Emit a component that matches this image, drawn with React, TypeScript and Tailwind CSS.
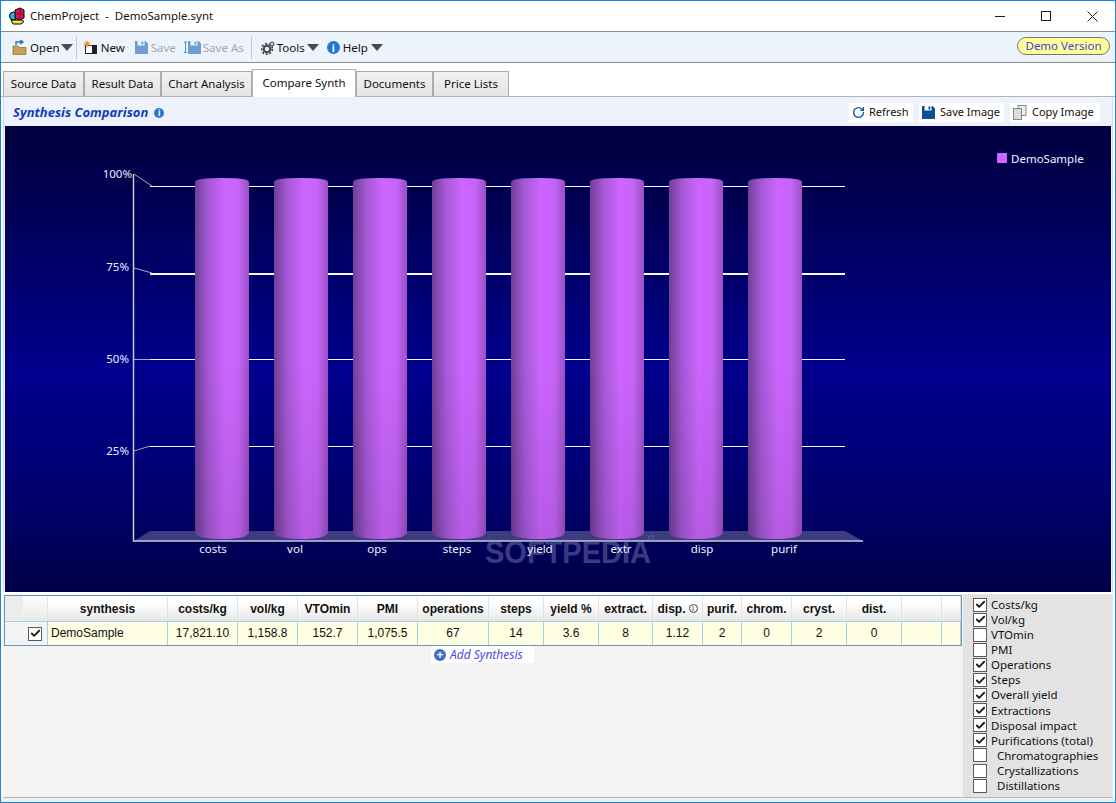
import React from 'react';
import { Check, RotateCw } from 'lucide-react';

const tabs = [
  { label: 'Source Data', w: 'w-[81px]' },
  { label: 'Result Data', w: 'w-[77px]' },
  { label: 'Chart Analysis', w: 'w-[91px]' },
  { label: 'Compare Synth', w: 'w-[104px]', active: true },
  { label: 'Documents', w: 'w-[77px]' },
  { label: 'Price Lists', w: 'w-[76px]' },
];

const barXs = [195, 274, 353, 432, 511, 590, 669, 748];
const xLabels = [
  ['costs', 213],
  ['vol', 295],
  ['ops', 377],
  ['steps', 457],
  ['yield', 540],
  ['extr', 621],
  ['disp', 702],
  ['purif', 784],
] as const;
const yLabels = [
  ['100%', 132, 178],
  ['75%', 129, 271],
  ['50%', 129, 363],
  ['25%', 129, 455],
] as const;

const columns = [
  ['synthesis', 'DemoSample', 'w-[120px]'],
  ['costs/kg', '17,821.10', 'w-[70px]'],
  ['vol/kg', '1,158.8', 'w-[60px]'],
  ['VTOmin', '152.7', 'w-[60px]'],
  ['PMI', '1,075.5', 'w-[60px]'],
  ['operations', '67', 'w-[71px]'],
  ['steps', '14', 'w-[55px]'],
  ['yield %', '3.6', 'w-[55px]'],
  ['extract.', '8', 'w-[54px]'],
  ['disp.', '1.12', 'w-[50px]'],
  ['purif.', '2', 'w-[39px]'],
  ['chrom.', '0', 'w-[50px]'],
  ['cryst.', '2', 'w-[55px]'],
  ['dist.', '0', 'w-[55px]'],
  ['', '', 'w-[40px]'],
  ['', '', 'w-[19px]'],
];

const options = [
  ['Costs/kg', true],
  ['Vol/kg', true],
  ['VTOmin', false],
  ['PMI', false],
  ['Operations', true],
  ['Steps', true],
  ['Overall yield', true],
  ['Extractions', true],
  ['Disposal impact', true],
  ['Purifications (total)', true],
  ['Chromatographies', false, true],
  ['Crystallizations', false, true],
  ['Distillations', false, true],
] as const;

const Caret = () => (
  <svg width="12" height="7" viewBox="0 0 12 7"><path d="M0 0h12L6 7z" fill="#4a4a4a" /></svg>
);

const Floppy = ({ color }: { color: string }) => (
  <svg width="13" height="13" viewBox="0 0 13 13">
    <path d="M0 0h2.500v4.500h7V0h1L13 2.500V13H0z" fill={color} />
    <rect x="6.500" y="0.500" width="1.800" height="3" fill={color} />
  </svg>
);

const Box = ({ on }: { on: boolean }) => (
  <span className="flex h-[14px] w-[14px] shrink-0 items-center justify-center border border-[#5a5a5a] bg-white">
    {on && <Check size={11} strokeWidth={4} className="text-[#1a1a1a]" />}
  </span>
);

function AppLogo() {
  return (
    <svg width="16" height="18" viewBox="0 0 16 18">
      <circle cx="4.500" cy="9" r="4" fill="#19c4d8" stroke="#000" />
      <path d="M6 3l5-2 4 2v8l-4 2-5-2z" fill="#e0115f" stroke="#000" />
      <path d="M11 1v12M6 7h9" stroke="#7a1030" />
      <path d="M2 13h10l3 1.500-3 2.500H4z" fill="#f3e04a" stroke="#000" />
    </svg>
  );
}

function Chart() {
  return (
    <div className="h-[466px] w-[1106px] bg-[linear-gradient(to_bottom,#000040_0%,#000058_20%,#00008e_52%,#000070_78%,#000048_100%)]">
      <svg width="1106" height="466" viewBox="5 126 1106 466" style={{ fontFamily: '"Noto Sans", sans-serif' }}>
        <defs>
          <linearGradient id="barH" x1="0" x2="1" y1="0" y2="0">
            <stop offset="0" stopColor="#6f3f95" />
            <stop offset="0.25" stopColor="#a658d6" />
            <stop offset="0.55" stopColor="#cc66ff" />
            <stop offset="0.8" stopColor="#c664f8" />
            <stop offset="1" stopColor="#9a50c4" />
          </linearGradient>
          <linearGradient id="barV" x1="0" x2="0" y1="0" y2="1">
            <stop offset="0.5" stopColor="#000" stopOpacity="0" />
            <stop offset="1" stopColor="#000" stopOpacity="0.1" />
          </linearGradient>
        </defs>

        <polygon points="134,541 150,531 845,531 863,541" fill="#3c3c80" />
        {[186, 273, 359, 446].map((y, i) => (
          <line key={y} x1="150" x2="845" y1={y + 0.5} y2={y + 0.5} stroke="#f8f8f8" strokeWidth={i === 1 ? 2 : 1} shapeRendering="crispEdges" />
        ))}
        <g stroke="#a8a8a8" strokeWidth="1" fill="none">
          <path d="M134 174L152 186" />
          <path d="M134 268L152 273" />
          <path d="M134 359.500L150 359.500" />
          <path d="M134 451L150 446" />
        </g>
        <path d="M133.500 174V541H863" stroke="#c8c8d8" strokeWidth="1.500" fill="none" />

        {barXs.map(x => {
          const d = `M${x} 182Q${x} 178 ${x + 27} 178Q${x + 54} 178 ${x + 54} 182V532Q${x + 54} 539 ${x + 27} 539Q${x} 539 ${x} 532Z`;
          return (
            <g key={x}>
              <path d={d} fill="url(#barH)" />
              <path d={d} fill="url(#barV)" />
            </g>
          );
        })}

        <text x="485" y="563" textLength="166" lengthAdjust="spacingAndGlyphs" fontSize="31" fontWeight="700" fill="#8080b8" opacity="0.45" style={{ fontFamily: '"Liberation Sans", sans-serif' }}>SOFTPEDIA</text>
        <circle cx="651" cy="538" r="2.500" fill="none" stroke="#8080b8" strokeOpacity="0.45" />

        {yLabels.map(([t, x, y]) => (
          <text key={t} x={x} y={y} textAnchor="end" fontSize="11.500" fill="#e8ecff">{t}</text>
        ))}
        {xLabels.map(([t, x]) => (
          <text key={t} x={x} y={553} textAnchor="middle" fontSize="11.500" fill="#f0f2ff">{t}</text>
        ))}

        <rect x="997" y="153" width="10" height="10" fill="#cc66ff" />
        <text x="1011" y="162.500" fontSize="11.500" fill="#f0f2ff">DemoSample</text>
      </svg>
    </div>
  );
}

function ComparisonTable() {
  return (
    <div className="mt-[1px] w-[958px] border border-[#6f94b4] font-['Liberation_Sans',sans-serif] text-[12px] text-[#111]">
      <div className="flex h-[26px] border-b border-[#a8d0e4] font-bold">
        <div className="w-[18px] shrink-0 border-r border-[#eee] bg-[#ececec]" />
        <div className="w-[25px] shrink-0 border-r border-[#e4e4e4] bg-[linear-gradient(to_bottom,#fff,#e8e8e8)]" />
        {columns.map(([head, , w], i) => (
          <div key={i} className={`${w} flex shrink-0 items-center justify-center gap-[3px] border-r border-[#e4e4e4] bg-[linear-gradient(to_bottom,#fff_30%,#e6e6e6)]`}>
            {head}
            {head === 'disp.' && (
              <span className="flex h-[9px] w-[9px] items-center justify-center rounded-full border border-[#444] text-[7px] font-normal leading-none">i</span>
            )}
          </div>
        ))}
      </div>
      <div className="flex h-[23px]">
        <div className="w-[18px] shrink-0 bg-[#f1f3f6]" />
        <div className="flex w-[25px] shrink-0 items-center justify-center border-r border-[#a8d0e4] bg-[#f4f4f4]"><Box on /></div>
        {columns.map(([, value, w], i) => (
          <div key={i} className={`${w} flex shrink-0 items-center border-r border-[#a8d0e4] bg-[#fefee2] pb-px ${i === 0 ? 'justify-start pl-[3px]' : 'justify-center'}`}>
            {value}
          </div>
        ))}
      </div>
    </div>
  );
}

export default function App() {
  return (
    <div className="flex h-[803px] w-[1116px] flex-col overflow-hidden border border-[#1883d7] bg-white font-['Noto_Sans',sans-serif] text-[11.5px] text-[#111]">
      {/* title bar */}
      <div className="flex h-[30px] shrink-0 items-center pl-[8px]">
        <AppLogo />
        <span className="ml-[5px] whitespace-pre">ChemProject  -  DemoSample.synt</span>
        <div className="ml-auto flex items-center text-[#222]">
          <div className="flex w-[46px] justify-center"><div className="h-px w-[10px] bg-[#222]" /></div>
          <div className="flex w-[46px] justify-center"><div className="h-[10px] w-[10px] border border-[#222]" /></div>
          <div className="flex w-[46px] justify-center">
            <svg width="11" height="11" viewBox="0 0 11 11"><path d="M.500.500l10 10M10.500.500l-10 10" stroke="#222" /></svg>
          </div>
        </div>
      </div>

      {/* toolbar */}
      <div className="flex h-[32px] shrink-0 items-center border-y border-[#8c8c8c] bg-[#edf3fb] pl-[11px] pt-px">
        <svg width="15" height="15" viewBox="0 0 15 15">
          <path d="M1 6h5l1 1.500h7V14.500H1z" fill="#c9a05a" stroke="#8a6a2a" strokeWidth="0.700" />
          <path d="M4 5V2h6M8 0l3 2-3 2" stroke="#2a72c0" strokeWidth="1.400" fill="none" />
        </svg>
        <span className="ml-[3px]">Open</span>
        <span className="ml-[1px]"><Caret /></span>
        <div className="ml-[3px] h-[22px] w-px bg-[#c8c8c8]" />
        <svg className="ml-[6px]" width="15" height="15" viewBox="0 0 15 15">
          <rect x="2" y="5" width="12" height="9" fill="#222" />
          <rect x="3" y="6" width="6" height="7" fill="#fff" />
          <path d="M4 0l1 2.500L7.500 2 6 4l1.500 2L5 5.500 4 8 3 5.500.500 6 2 4 .500 2 3 2.500z" fill="#e8912a" />
        </svg>
        <span className="ml-[3px]">New</span>
        <span className="ml-[10px]"><Floppy color="#6c9fcf" /></span>
        <span className="ml-[3px] text-[#a4a8ac]">Save</span>
        <span className="ml-[8px] flex items-center gap-px">
          <svg width="3" height="13" viewBox="0 0 3 13"><path d="M0 1h3M1.500 1v10M0 11.500h3" stroke="#4f8cc4" fill="none" /></svg>
          <Floppy color="#6c9fcf" />
        </span>
        <span className="ml-[2px] text-[#a4a8ac]">Save As</span>
        <div className="ml-[7px] h-[22px] w-px bg-[#c8c8c8]" />
        <svg className="ml-[9px]" width="14" height="14" viewBox="0 0 14 14">
          <circle cx="6" cy="8" r="3.300" fill="none" stroke="#444" strokeWidth="2.200" />
          <circle cx="6" cy="8" r="5.400" fill="none" stroke="#444" strokeWidth="1.600" strokeDasharray="2 1.800" />
          <circle cx="11" cy="3" r="1.800" fill="none" stroke="#666" strokeWidth="1.400" />
        </svg>
        <span className="ml-[2px]">Tools</span>
        <span className="ml-[2px]"><Caret /></span>
        <span className="ml-[8px] flex h-[13px] w-[13px] items-center justify-center rounded-full bg-[#1e78d8] text-[10px] font-bold leading-none text-white">i</span>
        <span className="ml-[3px]">Help</span>
        <span className="ml-[3px]"><Caret /></span>
        <div className="ml-auto mr-[5px] mt-[-3px] flex h-[18px] w-[93px] items-center justify-center rounded-[9px] border border-[#777] bg-[#ffff99] text-[#4a3cd8]">Demo Version</div>
      </div>

      {/* tabs */}
      <div className="flex h-[34px] shrink-0 items-end border-b border-[#b4b4b4] pl-[2px]">
        {tabs.map(t =>
          t.active ? (
            <div key={t.label} className={`${t.w} z-10 mb-[-1px] flex h-[28px] items-center justify-center border border-b-0 border-[#b0b0b0] bg-white pb-[2px]`}>{t.label}</div>
          ) : (
            <div key={t.label} className={`${t.w} flex h-[25px] items-center justify-center border border-b-0 border-[#acacac] bg-[linear-gradient(to_bottom,#f2f2f2,#e4e4e4)]`}>{t.label}</div>
          ),
        )}
      </div>

      {/* panel */}
      <div className="flex min-h-0 flex-1 flex-col px-[2px]">
        <div className="flex h-[29px] shrink-0 items-center border-x border-[#d5dcea] bg-[#eef2fd] pl-[9px] pr-[12px] pt-[2px]">
          <span className="whitespace-nowrap text-[13px] font-bold italic text-[#0f3fb8]">Synthesis Comparison</span>
          <span className="ml-[6px] flex h-[10px] w-[10px] items-center justify-center rounded-full bg-[#2a78c8] text-[8px] font-bold leading-none text-white">i</span>
          <div className="ml-auto flex items-center gap-[6px] text-[11px]">
            <div className="flex h-[19px] w-[64px] items-center gap-[4px] whitespace-nowrap bg-white pl-[3px]">
              <RotateCw size={13} strokeWidth={2.500} className="text-[#0b5a9c]" />
              Refresh
            </div>
            <div className="flex h-[19px] w-[85px] items-center gap-[5px] whitespace-nowrap bg-white pl-[3px]">
              <Floppy color="#0b4f94" />
              Save Image
            </div>
            <div className="flex h-[19px] w-[90px] items-center gap-[5px] whitespace-nowrap bg-white pl-[3px]">
              <svg width="14" height="15" viewBox="0 0 14 15">
                <rect x="5" y="0.500" width="8" height="10" fill="#eee" stroke="#888" />
                <rect x="0.500" y="3.500" width="8" height="11" fill="#ddd" stroke="#888" />
              </svg>
              Copy Image
            </div>
          </div>
        </div>

        <div className="shrink-0 border-x border-[#d5dcea] bg-[#eef2fd] pl-[1px]"><Chart /></div>

        <div className="mt-[2px] flex min-h-0 flex-1 border-b border-[#b8b8b8] bg-[#f3f3f3]">
          <div className="w-[960px] shrink-0 pl-px">
            <ComparisonTable />
            <div className="ml-[427px] flex h-[17px] w-[103px] items-center whitespace-nowrap bg-white pl-[3px] text-[12px] italic text-[#4a4ae8]">
              <span className="mr-[4px] flex h-[12px] w-[12px] items-center justify-center rounded-full bg-[#3f6fc8] text-[12px] font-bold not-italic leading-none text-white">+</span>
              Add Synthesis
            </div>
          </div>
          <div className="flex-1 bg-[#e3e3e3] pl-[10px] pt-[3px]">
            {options.map(([label, on, indent]) => (
              <div key={label} className="flex h-[15.1px] items-center">
                <Box on={on} />
                <span className={`${indent ? 'ml-[10px]' : 'ml-[4px]'} whitespace-nowrap`}>{label}</span>
              </div>
            ))}
          </div>
        </div>
      </div>
      <div className="h-[4px] shrink-0 bg-[#f0f0f0]" />
    </div>
  );
}
